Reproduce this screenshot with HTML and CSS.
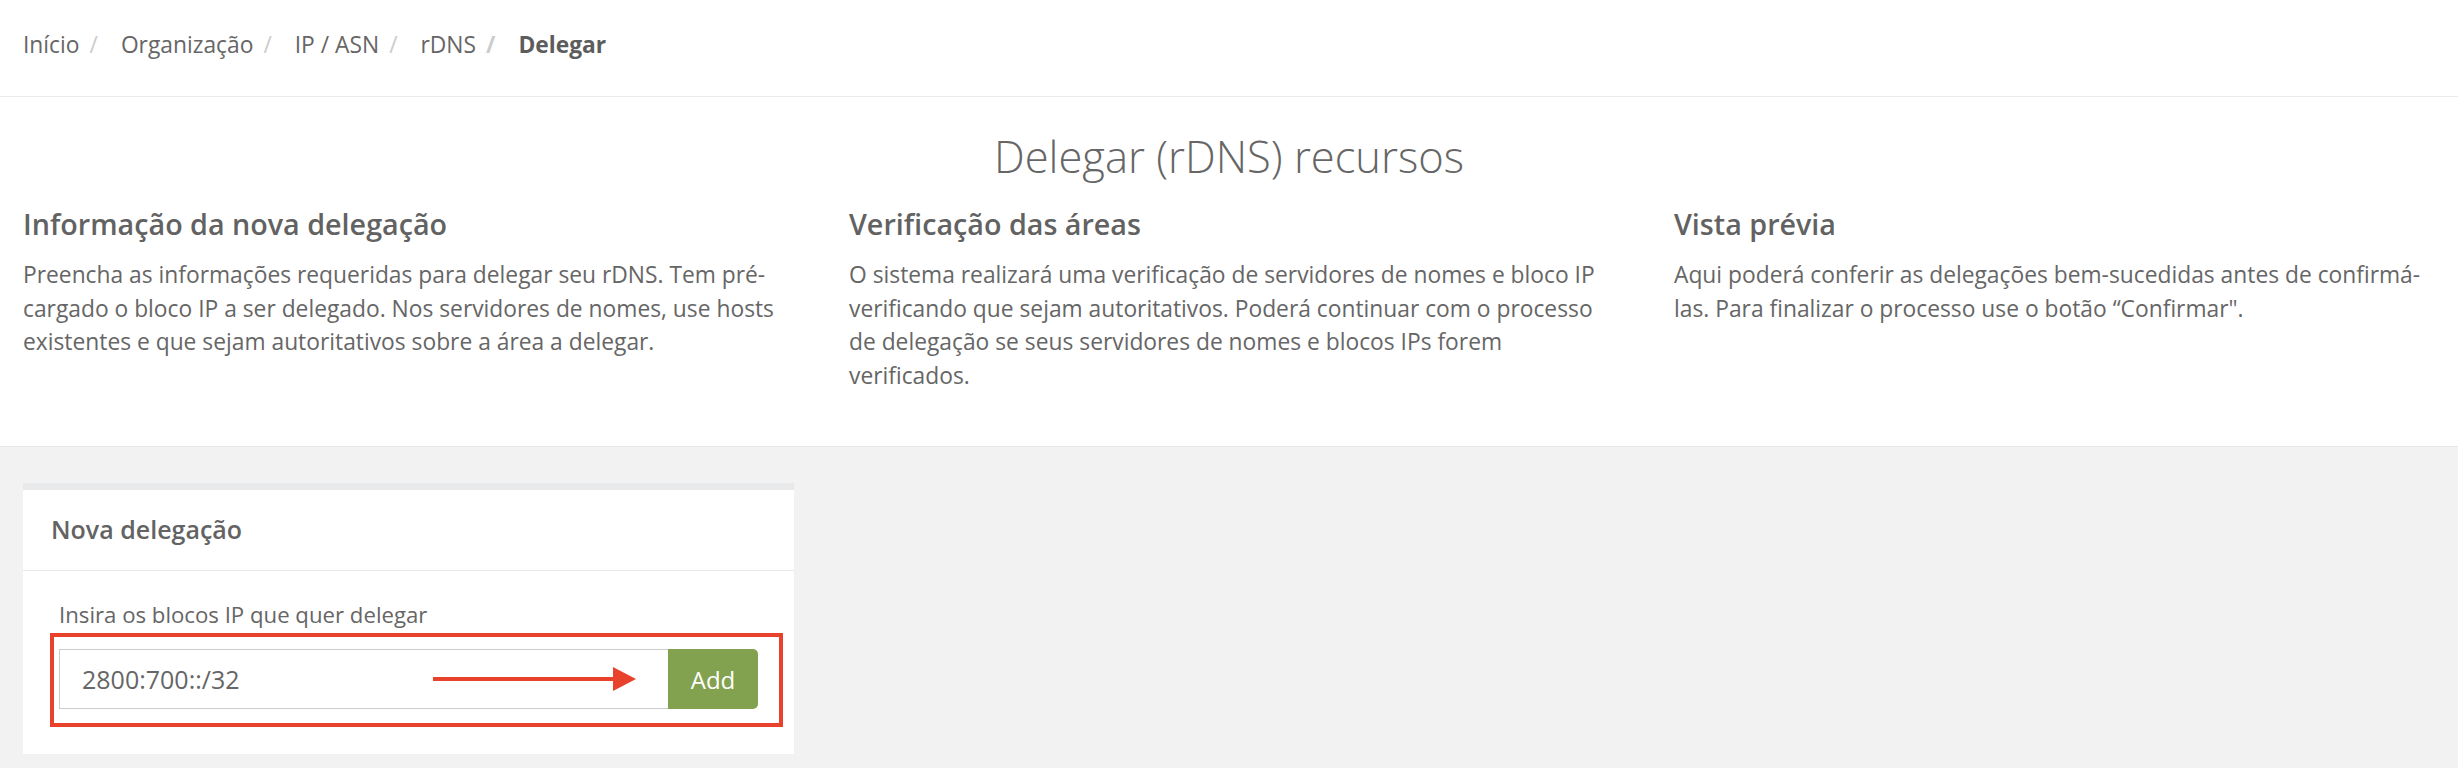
FILE: index.html
```html
<!DOCTYPE html>
<html lang="pt-BR">
<head>
    <meta charset="UTF-8">
    <meta name="viewport" content="width=device-width, initial-scale=1.0">
    <title>Delegar (rDNS) recursos</title>
    <link rel="stylesheet" href="styles.css">
</head>
<body>
    <ol class="breadcrumb">
        <li><a href="#">Início</a></li>
        <li><a href="#">Organização</a></li>
        <li><a href="#">IP / ASN</a></li>
        <li><a href="#">rDNS</a></li>
        <li class="active">Delegar</li>
    </ol>

    <section class="intro">
        <h1 class="page-title">Delegar (rDNS) recursos</h1>
        <div class="steps">
            <div class="step">
                <h2>Informação da nova delegação</h2>
                <p>Preencha as informações requeridas para delegar seu rDNS. Tem pré-cargado o bloco IP a ser delegado. Nos servidores de nomes, use hosts existentes e que sejam autoritativos sobre a área a delegar.</p>
            </div>
            <div class="step">
                <h2>Verificação das áreas</h2>
                <p>O sistema realizará uma verificação de servidores de nomes e bloco IP verificando que sejam autoritativos. Poderá continuar com o processo de delegação se seus servidores de nomes e blocos IPs forem verificados.</p>
            </div>
            <div class="step">
                <h2>Vista prévia</h2>
                <p>Aqui poderá conferir as delegações bem-sucedidas antes de confirmá-las. Para finalizar o processo use o botão “Confirmar".</p>
            </div>
        </div>
    </section>

    <main class="workspace">
        <div class="panel">
            <div class="panel-heading">Nova delegação</div>
            <div class="panel-body">
                <label for="ipBlock" class="field-label">Insira os blocos IP que quer delegar</label>
                <div class="highlight">
                    <div class="input-group">
                        <input type="text" id="ipBlock" value="2800:700::/32">
                        <button type="button" class="btn-add">Add</button>
                        <!-- seta de anotação -->
                        <svg class="arrow" width="204" height="26" viewBox="0 0 204 26">
                            <rect x="0" y="11" width="182" height="4" fill="#e8412c"/>
                            <polygon points="180,1 203,13 180,25" fill="#e8412c"/>
                        </svg>
                    </div>
                </div>
            </div>
        </div>
    </main>
</body>
</html>
```

FILE: styles.css
```css
* {
    margin: 0;
    padding: 0;
    box-sizing: border-box;
}

body {
    font-family: 'Open Sans', 'Noto Sans', sans-serif;
    color: #666;
    background: #fff;
    min-height: 100vh;
    display: flex;
    flex-direction: column;
}

/* breadcrumb */
.breadcrumb {
    list-style: none;
    display: flex;
    padding: 28px 23px 35px;
    font-size: 22.8px;
    line-height: 33px;
    border-bottom: 1px solid #ebebeb;
}

.breadcrumb a {
    color: #666;
    text-decoration: none;
}

.breadcrumb li + li::before {
    content: "/";
    color: #ccc;
    padding: 0 23px 0 10px;
}

.breadcrumb .active {
    font-weight: 700;
    color: #5c5c5c;
}

/* intro */
.intro {
    padding: 37px 23px 54px;
    border-bottom: 1px solid #e6e6e6;
}

.page-title {
    text-align: center;
    font-size: 43.5px;
    line-height: 46px;
    font-weight: 300;
    color: #666;
    margin-bottom: 27px;
}

.steps {
    display: grid;
    grid-template-columns: 826px 825px 1fr;
}

.step p {
    max-width: 800px;
    font-size: 22.8px;
    line-height: 33.5px;
    color: #666;
}

.step:nth-child(2) p {
    max-width: 760px;
}

.step h2 {
    font-size: 28.7px;
    line-height: 34px;
    font-weight: 600;
    color: #626262;
    margin-bottom: 17px;
}

/* area cinza */
.workspace {
    flex: 1;
    background: #f2f2f2;
    padding: 36px 23px 14px;
}

.panel {
    width: 771px;
    background: #fff;
    border-top: 7px solid #e8e9ea;
}

.panel-heading {
    padding: 22px 28px 24px;
    font-size: 25px;
    line-height: 34px;
    font-weight: 600;
    color: #636363;
    border-bottom: 1px solid #e8e8e8;
}

.panel-body {
    padding: 27px 11px 27px 27px;
}

.field-label {
    display: block;
    margin: 0 0 2px 9px;
    font-size: 22.2px;
    line-height: 33px;
    color: #666;
}

.highlight {
    border: 4px solid #e8412c;
    padding: 12px 21px 14px 5px;
}

.input-group {
    display: flex;
    height: 60px;
    position: relative;
}

.input-group input {
    flex: 1;
    min-width: 0;
    border: 1px solid #ccc;
    border-right: none;
    padding: 0 22px;
    font-family: inherit;
    font-size: 25px;
    color: #666;
    outline: none;
}

.btn-add {
    width: 90px;
    border: none;
    border-radius: 0 5px 5px 0;
    background: #83a24f;
    color: #fff;
    font-family: inherit;
    font-size: 24px;
    cursor: pointer;
}

.arrow {
    position: absolute;
    left: 374px;
    top: 17px;
}
```
